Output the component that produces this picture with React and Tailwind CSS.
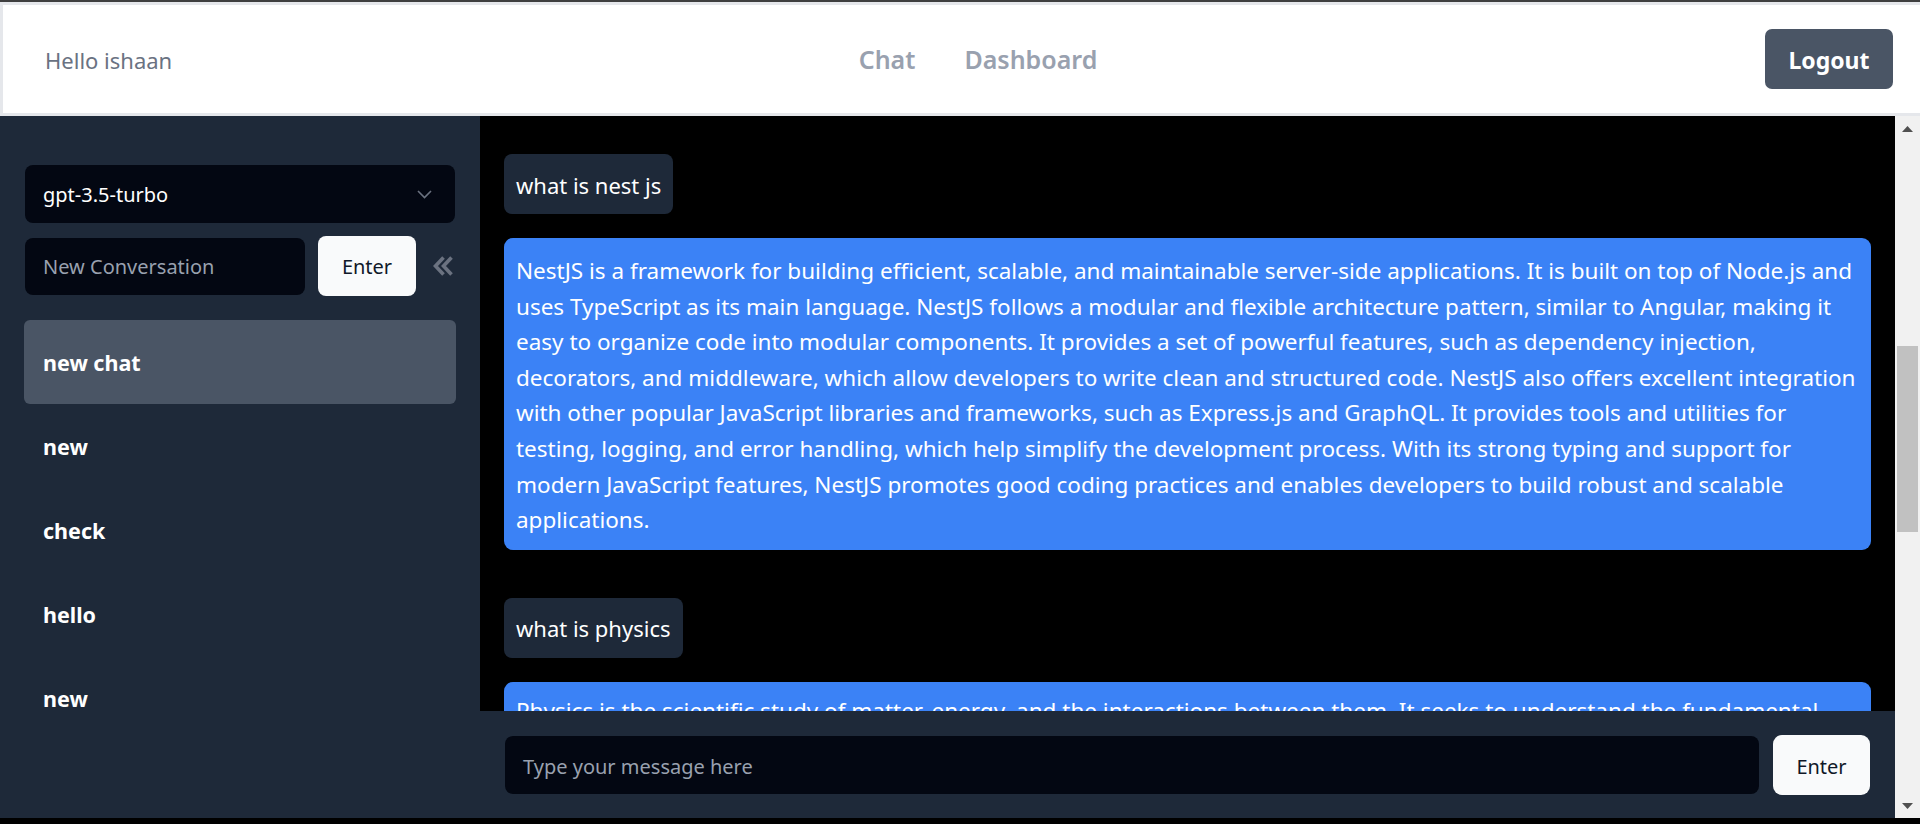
import React from "react";

const answerOne = [
  "NestJS is a framework for building efficient, scalable, and maintainable server-side applications. It is built on top of Node.js and",
  "uses TypeScript as its main language. NestJS follows a modular and flexible architecture pattern, similar to Angular, making it",
  "easy to organize code into modular components. It provides a set of powerful features, such as dependency injection,",
  "decorators, and middleware, which allow developers to write clean and structured code. NestJS also offers excellent integration",
  "with other popular JavaScript libraries and frameworks, such as Express.js and GraphQL. It provides tools and utilities for",
  "testing, logging, and error handling, which help simplify the development process. With its strong typing and support for",
  "modern JavaScript features, NestJS promotes good coding practices and enables developers to build robust and scalable",
  "applications.",
];

const answerTwo = [
  "Physics is the scientific study of matter, energy, and the interactions between them. It seeks to understand the fundamental",
];

const conversations = ["new chat", "new", "check", "hello", "new"];

const ChevronDown = () => (
  <svg width="15" height="9" viewBox="0 0 15 9" fill="none">
    <polyline points="1,1 7.5,7.5 14,1" stroke="#6b7280" strokeWidth="1.6" />
  </svg>
);

const DoubleLeft = () => (
  <svg width="22" height="22" viewBox="0 0 22 22" fill="none">
    <path d="M11.5 2.5 L3.5 11 L11.5 19.5" stroke="#6b7280" strokeWidth="3.6" />
    <path d="M19.5 2.5 L11.5 11 L19.5 19.5" stroke="#6b7280" strokeWidth="3.6" />
  </svg>
);

const Bubble = ({ lines, className = "" }) => (
  <div className={`rounded-[9px] bg-[#3b82f6] px-[12px] pb-[12px] text-[22.5px] leading-[35.6px] text-white ${className}`}>
    {lines.map((l, i) => (
      <span key={i} className="block whitespace-nowrap">
        {l}
      </span>
    ))}
  </div>
);

const Question = ({ children, className = "" }) => (
  <div className={`flex ${className}`}>
    <div className="flex h-[60px] items-center rounded-[8px] bg-gray-800 px-[12px] pt-[2px] text-[22px] text-white">
      {children}
    </div>
  </div>
);

export default function App() {
  return (
    <div className="h-[824px] w-full overflow-hidden bg-black font-['Noto_Sans','Open_Sans',sans-serif]">
      <div className="h-[2px] bg-[#3f3f3f]" />

      {/* header */}
      <header className="flex h-[114px] items-center border-[3px] border-r-0 border-gray-200 bg-white pl-[42px] pr-[27px]">
        <div className="flex-1 pt-[2px]">
          <span className="text-[22px] text-gray-500">Hello ishaan</span>
        </div>
        <nav className="ml-[18px] flex items-center gap-[49px] pt-[2px] text-[25px] font-semibold text-gray-400">
          <span>Chat</span>
          <span>Dashboard</span>
        </nav>
        <div className="flex flex-1 justify-end">
          <button className="h-[60px] w-[128px] rounded-[7px] bg-gray-600 pt-[2px] text-[23px] font-bold text-white">
            Logout
          </button>
        </div>
      </header>

      <div className="flex h-[702px]">
        {/* sidebar */}
        <aside className="w-[480px] shrink-0 bg-gray-800 px-[24px] pt-[49px]">
          <div className="ml-[1px] flex h-[58px] w-[430px] items-center justify-between rounded-[8px] bg-gray-950 pl-[18px] pr-[23px] text-[20px] text-white">
            <span className="pt-[2px]">gpt-3.5-turbo</span>
            <ChevronDown />
          </div>

          <div className="mt-[13px] flex items-center">
            <div className="ml-[1px] flex h-[57px] w-[280px] items-center rounded-[8px] bg-gray-950 pl-[18px] pt-[2px] text-[20px] text-gray-400">
              New Conversation
            </div>
            <button className="ml-[13px] h-[60px] w-[98px] rounded-[8px] bg-gray-50 pt-[2px] text-[20px] text-gray-900">
              Enter
            </button>
            <span className="ml-[16px] flex">
              <DoubleLeft />
            </span>
          </div>

          <ul className="mt-[24px]">
            {conversations.map((c, i) => (
              <li
                key={i}
                className={`flex h-[84px] items-center rounded-[6px] pl-[19px] pt-[3px] text-[21.5px] font-bold text-white ${
                  i === 0 ? "bg-gray-600" : ""
                }`}
              >
                {c}
              </li>
            ))}
          </ul>
        </aside>

        {/* chat column */}
        <div className="flex flex-1 flex-col">
          <div className="h-[595px] overflow-hidden px-[24px] pt-[38px]">
            <Question>what is nest js</Question>
            <Bubble lines={answerOne} className="mt-[24px] pt-[15px]" />
            <Question className="mt-[48px]">what is physics</Question>
            <Bubble lines={answerTwo} className="mt-[24px] pt-[11px]" />
          </div>
          <div className="flex h-[107px] items-center gap-[14px] bg-gray-800 px-[25px]">
            <div className="flex h-[58px] flex-1 items-center rounded-[8px] bg-gray-950 pl-[18px] pt-[4px] text-[20px] text-gray-400">
              Type your message here
            </div>
            <button className="h-[60px] w-[97px] rounded-[9px] bg-gray-50 pt-[4px] text-[20px] text-gray-900">
              Enter
            </button>
          </div>
        </div>

        {/* scrollbar */}
        <div className="flex w-[25px] shrink-0 flex-col bg-[#f1f1f1]">
          <div className="flex h-[25px] items-center justify-center">
            <svg width="11" height="6" viewBox="0 0 11 6">
              <polygon points="5.5,0 11,6 0,6" fill="#505050" />
            </svg>
          </div>
          <div className="mx-[2px] mt-[205px] h-[186px] bg-[#c1c1c1]" />
          <div className="flex-1" />
          <div className="flex h-[25px] items-center justify-center">
            <svg width="11" height="6" viewBox="0 0 11 6">
              <polygon points="0,0 11,0 5.5,6" fill="#505050" />
            </svg>
          </div>
        </div>
      </div>
    </div>
  );
}
